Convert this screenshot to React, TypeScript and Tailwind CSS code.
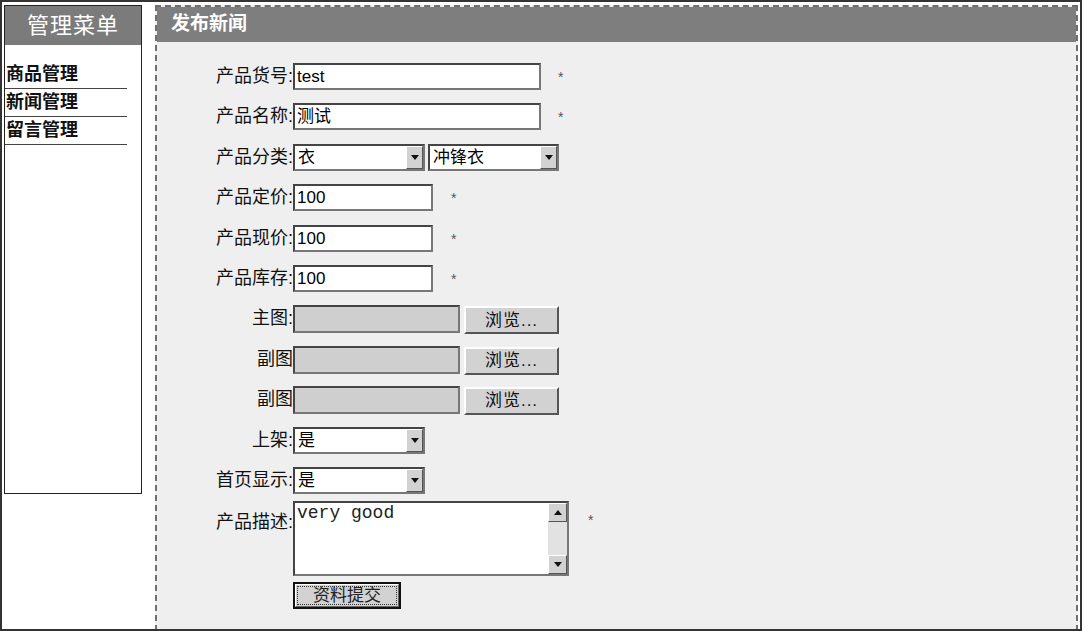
import React from 'react';

const font = { fontFamily: '"Liberation Sans", "Noto Sans CJK SC", sans-serif' };

const Star = () => <span className="text-[#555] text-[14px] leading-none">*</span>;

const Arrow = ({ up }: { up?: boolean }) => (
  <svg width="8" height="5" viewBox="0 0 8 5">
    <path d={up ? 'M0 5 L4 0 L8 5 Z' : 'M0 0 L8 0 L4 5 Z'} fill="#111" />
  </svg>
);

const inset = 'border-2 border-t-[#444] border-l-[#444] border-b-[#777] border-r-[#777]';
const raised = 'border border-t-white border-l-white border-b-[#555] border-r-[#555]';

const Select = ({ value, w }: { value: string; w: string }) => (
  <div className={`flex h-[27px] ${w} ${inset} bg-white`}>
    <span className="flex-1 pl-[3px] text-[17px] leading-[23px] text-black">{value}</span>
    <div className={`w-[17px] bg-[#d2d2d2] ${raised} flex items-center justify-center`}>
      <Arrow />
    </div>
  </div>
);

const Label = ({ text }: { text: string }) => (
  <div className="w-[136px] shrink-0 text-right text-[18px] text-[#111] leading-[27px]">{text}</div>
);

const FileRow = ({ label }: { label: string }) => (
  <div className="flex items-start h-[40.4px]">
    <Label text={label} />
    <div className={`w-[167px] h-[28px] ${inset} bg-[#cfcfcf]`} />
    <div className={`ml-[4px] mt-[1px] w-[95px] h-[28px] bg-[#d2d2d2] border-2 border-t-white border-l-white border-b-[#555] border-r-[#555] flex items-center justify-center text-[17px] text-[#111] tracking-[1px]`}>
      浏览...
    </div>
  </div>
);

const TextRow = ({ label, value, w, star }: { label: string; value: string; w: string; star: string }) => (
  <div className="flex items-start h-[40.4px]">
    <Label text={label} />
    <div className={`h-[27px] ${w} ${inset} bg-white pl-[2px] text-[17px] leading-[23px] text-black`}>{value}</div>
    <div className={`${star} pt-[2px]`}>
      <Star />
    </div>
  </div>
);

export default function App() {
  return (
    <div style={font} className="w-[1082px] h-[631px] border-2 border-[#333] bg-white flex items-start pt-[3px] pl-[2px] overflow-hidden">
      {/* left menu */}
      <div className="w-[138px] h-[489px] border border-[#222] bg-white shrink-0">
        <div className="h-[39px] bg-[#7b7b7b] text-white text-[22px] flex items-center justify-center tracking-[1px]">
          管理菜单
        </div>
        <div className="pt-[16px]">
          {['商品管理', '新闻管理', '留言管理'].map((m) => (
            <div key={m} className="w-[122px] h-[28px] border-b border-[#444] text-[18px] font-bold text-[#111] leading-[27px] pl-[1px]">
              {m}
            </div>
          ))}
        </div>
      </div>

      {/* main panel */}
      <div className="ml-[13px] w-[923px] h-[626px] border-2 border-b-0 border-dashed border-[#6f6f6f] bg-[#efefef]">
        <div className="h-[35px] bg-[#7e7e7e] text-white text-[19px] font-bold flex items-center pl-[14px]">
          发布新闻
        </div>
        <div className="pt-[21px]">
          <TextRow label="产品货号:" value="test" w="w-[248px]" star="ml-[17px]" />
          <TextRow label="产品名称:" value="测试" w="w-[248px]" star="ml-[17px]" />
          <div className="flex items-start h-[40.4px]">
            <Label text="产品分类:" />
            <Select value="衣" w="w-[132px]" />
            <div className="ml-[3px]">
              <Select value="冲锋衣" w="w-[131px]" />
            </div>
          </div>
          <TextRow label="产品定价:" value="100" w="w-[140px]" star="ml-[18px]" />
          <TextRow label="产品现价:" value="100" w="w-[140px]" star="ml-[18px]" />
          <TextRow label="产品库存:" value="100" w="w-[140px]" star="ml-[18px]" />
          <FileRow label="主图:" />
          <FileRow label="副图" />
          <FileRow label="副图" />
          <div className="flex items-start h-[40.4px]">
            <Label text="上架:" />
            <Select value="是" w="w-[132px]" />
          </div>
          <div className="flex items-start h-[34px]">
            <Label text="首页显示:" />
            <Select value="是" w="w-[132px]" />
          </div>
          <div className="flex items-start">
            <div className="w-[136px] shrink-0 text-right text-[18px] text-[#111] pt-[8px] leading-[27px]">产品描述:</div>
            <div className={`w-[276px] h-[75px] ${inset} bg-white flex`}>
              <div className="flex-1 pl-[2px] text-[18px] leading-[20px] text-[#222]" style={{ fontFamily: '"Liberation Mono", monospace' }}>
                very good
              </div>
              <div className="w-[19px] flex flex-col bg-[#e2e2e2]">
                <div className={`h-[19px] bg-[#d2d2d2] ${raised} flex items-center justify-center`}>
                  <Arrow up />
                </div>
                <div className="flex-1" />
                <div className={`h-[19px] bg-[#d2d2d2] ${raised} flex items-center justify-center`}>
                  <Arrow />
                </div>
              </div>
            </div>
            <div className="ml-[19px] pt-[7px]">
              <Star />
            </div>
          </div>
          <div className="flex mt-[6px]">
            <div className="w-[136px] shrink-0" />
            <div className="w-[108px] h-[27px] border-2 border-[#111] bg-[#d2d2d2]">
              <div className="h-full border border-t-white border-l-white border-b-[#666] border-r-[#666] p-[1px]">
                <div className="h-full border border-dotted border-[#333] flex items-center justify-center text-[17px] text-[#222]">
                  资料提交
                </div>
              </div>
            </div>
          </div>
        </div>
      </div>
    </div>
  );
}
